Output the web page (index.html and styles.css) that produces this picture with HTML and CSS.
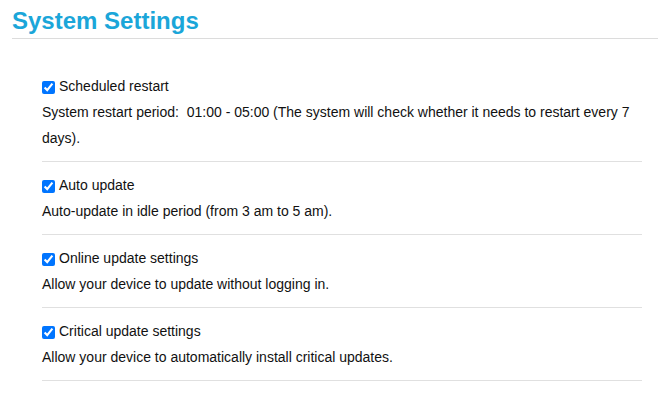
FILE: index.html
```html
<!DOCTYPE html>
<html>
<head>
<meta charset="utf-8">
<link rel="stylesheet" href="styles.css">
</head>
<body>
<div class="page">
  <h1 class="title">System Settings</h1>
  <div class="sections">
    <div class="section">
      <label class="opt"><input type="checkbox" checked>Scheduled restart</label>
      <p class="desc">System restart period:&nbsp; 01:00 - 05:00 (The system will check whether it needs to restart every 7 days).</p>
    </div>
    <div class="section">
      <label class="opt"><input type="checkbox" checked>Auto update</label>
      <p class="desc">Auto-update in idle period (from 3 am to 5 am).</p>
    </div>
    <div class="section">
      <label class="opt"><input type="checkbox" checked>Online update settings</label>
      <p class="desc">Allow your device to update without logging in.</p>
    </div>
    <div class="section">
      <label class="opt"><input type="checkbox" checked>Critical update settings</label>
      <p class="desc">Allow your device to automatically install critical updates.</p>
    </div>
  </div>
</div>
</body>
</html>
```
FILE: styles.css
```css
html, body {
  margin: 0;
  padding: 0;
  background: #fff;
}
body {
  font-family: "Liberation Sans", Arial, sans-serif;
  color: #222;
}
.page {
  padding: 0 11px 0 12px;
}
.title {
  margin: 0;
  padding-top: 4px;
  font-size: 24px;
  line-height: 34px;
  font-weight: bold;
  color: #1ba6d9;
  border-bottom: 1px solid #dcdcdc;
}
.sections {
  margin: 24px 16px 0 30px;
}
.section {
  padding: 10px 0;
  border-bottom: 1px solid #e0e0e0;
}
.opt {
  display: flex;
  align-items: center;
  font-size: 14px;
  line-height: 26px;
  color: #111;
}
.opt input {
  margin: 2px 4px 0 0;
  width: 13px;
  height: 13px;
}
.desc {
  margin: 0;
  font-size: 14px;
  line-height: 26px;
  color: #111;
}
```
